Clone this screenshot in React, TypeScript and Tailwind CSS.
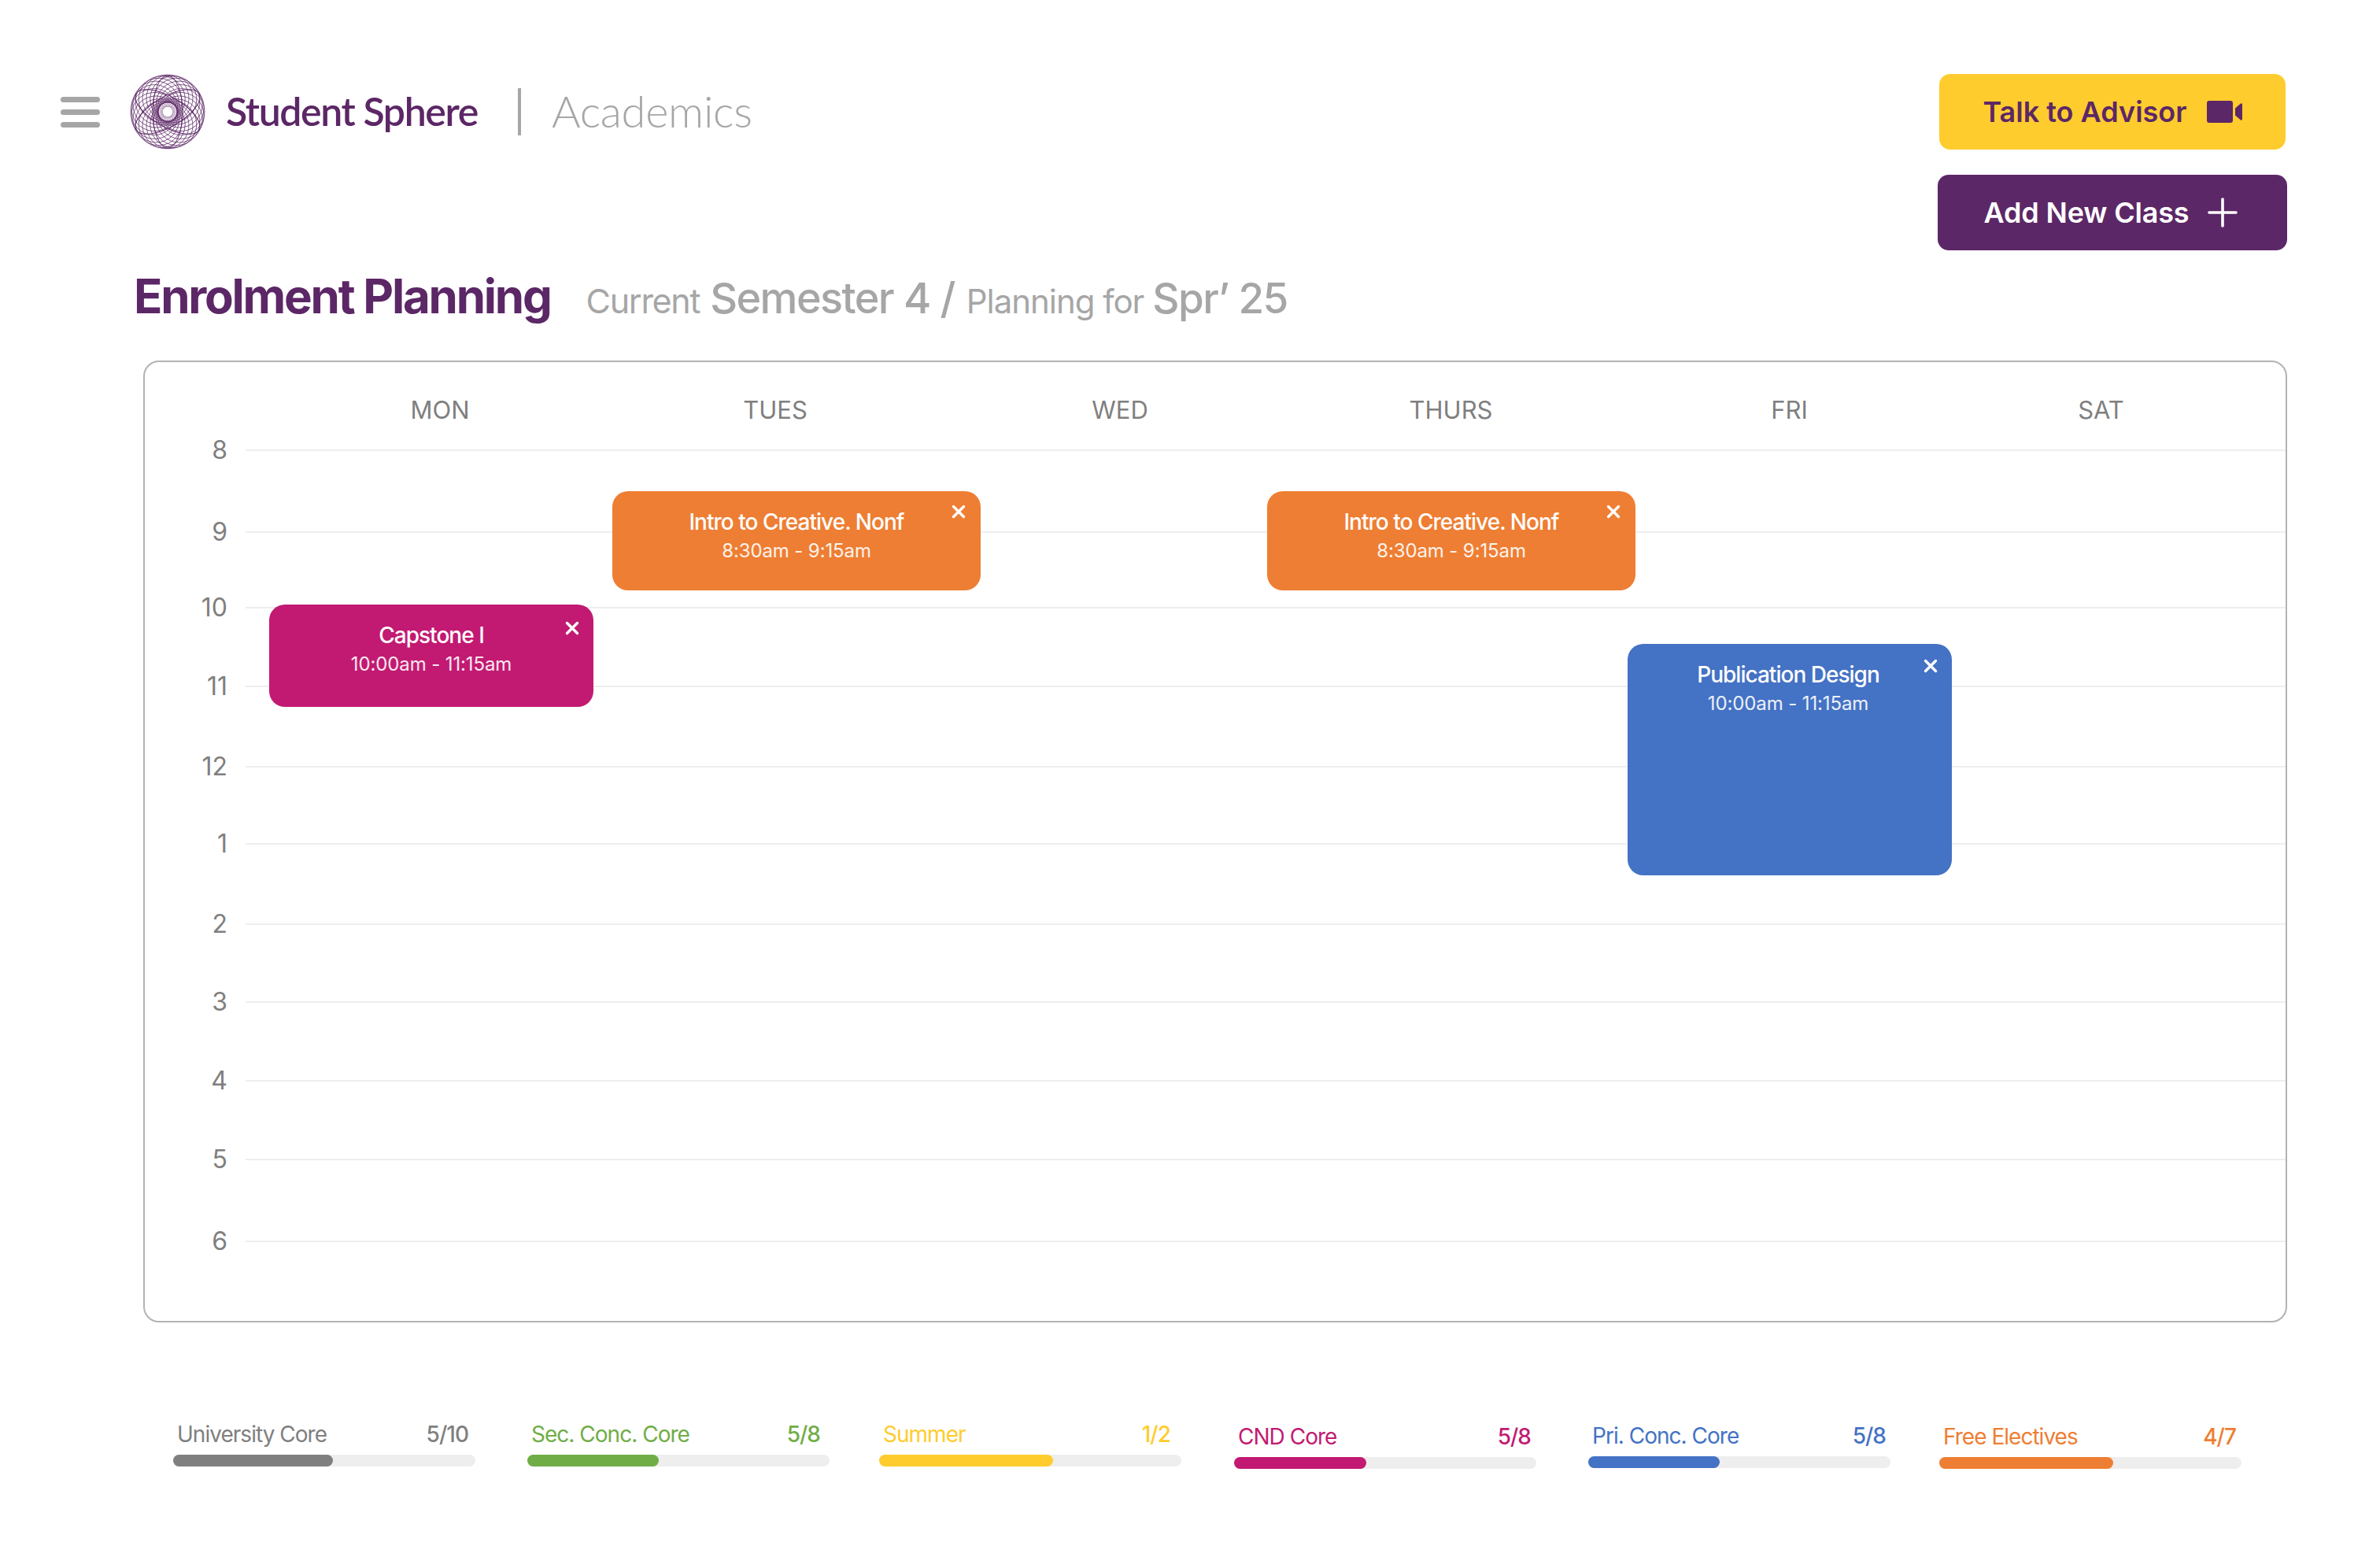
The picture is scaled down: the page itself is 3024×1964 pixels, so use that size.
const days = [
    { name: "MON", w: "w-[494px]" },
    { name: "TUES", w: "w-[358px]" },
    { name: "WED", w: "w-[518px]" },
    { name: "THURS", w: "w-[323px]" },
    { name: "FRI", w: "w-[537px]" },
    { name: "SAT", w: "w-[255px]" },
];

const hours = [
    { label: "8", h: "h-[104px]" },
    { label: "9", h: "h-[96px]" },
    { label: "10", h: "h-[100px]" },
    { label: "11", h: "h-[102px]" },
    { label: "12", h: "h-[98px]" },
    { label: "1", h: "h-[102px]" },
    { label: "2", h: "h-[99px]" },
    { label: "3", h: "h-[100px]" },
    { label: "4", h: "h-[100px]" },
    { label: "5", h: "h-[104px]" },
    { label: "6", h: "h-[103px]" },
];

const progress = [
    { name: "University Core", val: "5/10", fill: "w-[203px]", text: "text-[#7f7f7f]", bar: "bg-[#7f7f7f]", ml: "ml-0", mt: "mt-0", pr: "pr-[9px]" },
    { name: "Sec. Conc. Core", val: "5/8", fill: "w-[167px]", text: "text-[#70ad47]", bar: "bg-[#70ad47]", ml: "ml-[66px]", mt: "mt-0", pr: "pr-[12px]" },
    { name: "Summer", val: "1/2", fill: "w-[221px]", text: "text-[#ffcc2e]", bar: "bg-[#ffcc2e]", ml: "ml-[63px]", mt: "mt-0", pr: "pr-[14px]" },
    { name: "CND Core", val: "5/8", fill: "w-[168px]", text: "text-[#c21a72]", bar: "bg-[#c21a72]", ml: "ml-[67px]", mt: "mt-[3px]", pr: "pr-[7px]" },
    { name: "Pri. Conc. Core", val: "5/8", fill: "w-[167px]", text: "text-[#4472c4]", bar: "bg-[#4472c4]", ml: "ml-[66px]", mt: "mt-[2px]", pr: "pr-[6px]" },
    { name: "Free Electives", val: "4/7", fill: "w-[221px]", text: "text-[#ee7e33]", bar: "bg-[#ee7e33]", ml: "ml-[62px]", mt: "mt-[3px]", pr: "pr-[7px]" },
];

function Logo() {
    const mesh = Array.from({ length: 22 }, (_, i) => (i * 360) / 22);
    const inner = Array.from({ length: 18 }, (_, i) => (i * 360) / 18);
    const petals = Array.from({ length: 3 }, (_, i) => (i * 180) / 3 + 30);
    return (
        <svg width="96" height="96" viewBox="-48 -48 96 96" fill="none" stroke="#5c2766">
            {mesh.map((a) => (
                <circle key={a} cx="17.5" cy="0" r="29.5" strokeWidth="0.7" transform={`rotate(${a})`} />
            ))}
            {inner.map((a) => (
                <circle key={a} cx="6" cy="0" r="12" strokeWidth="0.25" transform={`rotate(${a})`} />
            ))}
            {petals.map((a) => (
                <ellipse key={a} cx="0" cy="0" rx="46" ry="19" strokeWidth="1" transform={`rotate(${a})`} />
            ))}
            <circle cx="0" cy="0" r="6.5" fill="#ffffff" stroke="none" />
        </svg>
    );
}

function CloseIcon() {
    return (
        <svg width="18" height="18" viewBox="0 0 18 18" fill="none" stroke="#ffffff" strokeWidth="3.4" strokeLinecap="round">
            <path d="M2.5 2.5 L15.5 15.5 M15.5 2.5 L2.5 15.5" />
        </svg>
    );
}

function ClassCard({ title, time, className, closeClass }: { title: string; time: string; className: string; closeClass: string }) {
    return (
        <div className={`absolute rounded-[20px] text-white text-center pt-[21px] ${className}`}>
            <div className="text-[28px] leading-[36px] font-medium tracking-[-0.035em]">{title}</div>
            <div className="text-[24px] leading-[36px] mt-[1px] text-white/90 tracking-[-0.005em]">{time}</div>
            <div className={`absolute ${closeClass}`}>
                <CloseIcon />
            </div>
        </div>
    );
}

export default function App() {
    return (
        <div className="w-[3024px] h-[1964px] bg-white overflow-hidden font-[Inter,sans-serif]">
            <div className="flex justify-between pt-[94px] pl-[77px] pr-[118px]">
                <div className="flex items-center h-[96px]">
                    <div className="flex flex-col gap-[9px] w-[50px]">
                        <div className="h-[7px] rounded-full bg-[#a6a6a6]"></div>
                        <div className="h-[7px] rounded-full bg-[#a6a6a6]"></div>
                        <div className="h-[7px] rounded-full bg-[#a6a6a6]"></div>
                    </div>
                    <div className="ml-[38px]">
                        <Logo />
                    </div>
                    <div className="ml-[26px] -mt-[2px] text-[50px] leading-none font-semibold text-[#5c2766] font-[Lato,sans-serif] tracking-[-0.028em] w-[371px]">Student Sphere</div>
                    <div className="w-[4px] h-[60px] bg-[#a6a6a6]"></div>
                    <div className="ml-[39px] -mt-[2px] text-[56px] leading-none font-light text-[#a6a6a6] font-[Lato,sans-serif] tracking-[-0.005em]">Academics</div>
                </div>
                <div className="flex flex-col items-end gap-[32px]">
                    <button type="button" className="w-[440px] h-[96px] mr-[2px] rounded-[14px] bg-[#ffcc2e] text-[#5c2766] flex items-center justify-center gap-[25px] text-[36px] font-semibold">
                        Talk to Advisor
                        <svg width="45" height="28" viewBox="0 0 45 28" fill="#5c2766">
                            <rect x="0" y="0" width="33" height="28" rx="3" />
                            <path d="M36 9.5 L43 3.5 Q45 2.5 45 5 L45 23 Q45 25.5 43 24.5 L36 18.5 Z" />
                        </svg>
                    </button>
                    <button type="button" className="w-[444px] h-[96px] rounded-[14px] bg-[#5c2766] text-white flex items-center justify-center gap-[24px] pr-[4px] text-[36px] font-semibold tracking-[-0.005em]">
                        Add New Class
                        <svg width="38" height="38" viewBox="0 0 38 38" fill="none" stroke="#ffffff" strokeWidth="3.6" strokeLinecap="round">
                            <path d="M19 2 L19 36 M2 19 L36 19" />
                        </svg>
                    </button>
                </div>
            </div>

            <div className="flex items-baseline mt-[20px] pl-[170px] h-[76px] text-[#a6a6a6]">
                <h1 className="text-[60px] leading-[76px] font-bold text-[#5c2766] tracking-[-0.0375em]">Enrolment Planning</h1>
                <span className="ml-[45px] text-[43px] tracking-[-0.03em]">Current</span>
                <span className="ml-[13px] text-[54px] font-medium tracking-[-0.03em]">Semester 4 /</span>
                <span className="ml-[15px] text-[42px] tracking-[-0.025em]">Planning for</span>
                <span className="ml-[11px] text-[53px] font-medium tracking-[-0.03em]">Spr’ 25</span>
            </div>

            <div className="relative mt-[44px] ml-[182px] mr-[118px] h-[1222px] border-2 border-[#b3b3b3] rounded-[20px] overflow-hidden">
                <div className="flex h-[111px] pt-[42px] text-[31px] leading-[38px] text-[#7f7f7f]">
                    {days.map((d, i) => (
                        <div key={d.name} className={`${d.w} text-center ${i === 0 ? "ml-[128px]" : ""}`}>{d.name}</div>
                    ))}
                </div>
                {hours.map((row) => (
                    <div key={row.label} className={`flex ${row.h}`}>
                        <div className="w-[105px] h-[36px] -mt-[17px] text-right text-[32px] leading-[36px] text-[#7f7f7f]">{row.label}</div>
                        <div className="ml-[23px] flex-1 h-[2px] bg-[#eeeeee]"></div>
                    </div>
                ))}
                <ClassCard title="Capstone I" time="10:00am - 11:15am" className="left-[158px] top-[308px] w-[412px] h-[130px] bg-[#c21a72]" closeClass="right-[18px] top-[21px]" />
                <ClassCard title="Intro to Creative. Nonf" time="8:30am - 9:15am" className="left-[594px] top-[164px] w-[468px] h-[126px] bg-[#ee7e33]" closeClass="right-[19px] top-[17px]" />
                <ClassCard title="Intro to Creative. Nonf" time="8:30am - 9:15am" className="left-[1426px] top-[164px] w-[468px] h-[126px] bg-[#ee7e33]" closeClass="right-[19px] top-[17px]" />
                <ClassCard title="Publication Design" time="10:00am - 11:15am" className="left-[1884px] top-[358px] w-[412px] h-[294px] pr-[4px] bg-[#4472c4]" closeClass="right-[18px] top-[19px]" />
            </div>

            <div className="flex mt-[124px] pl-[220px]">
                {progress.map((p) => (
                    <div key={p.name} className={`w-[384px] ${p.ml} ${p.mt}`}>
                        <div className={`flex justify-between pl-[5px] h-[36px] text-[28px] leading-[36px] tracking-[-0.035em] ${p.pr} ${p.text}`}>
                            <span>{p.name}</span>
                            <span className="font-medium">{p.val}</span>
                        </div>
                        <div className="mt-[8px] h-[15px] rounded-full bg-[#eeeeee]">
                            <div className={`h-full rounded-full ${p.fill} ${p.bar}`}></div>
                        </div>
                    </div>
                ))}
            </div>
        </div>
    );
}
